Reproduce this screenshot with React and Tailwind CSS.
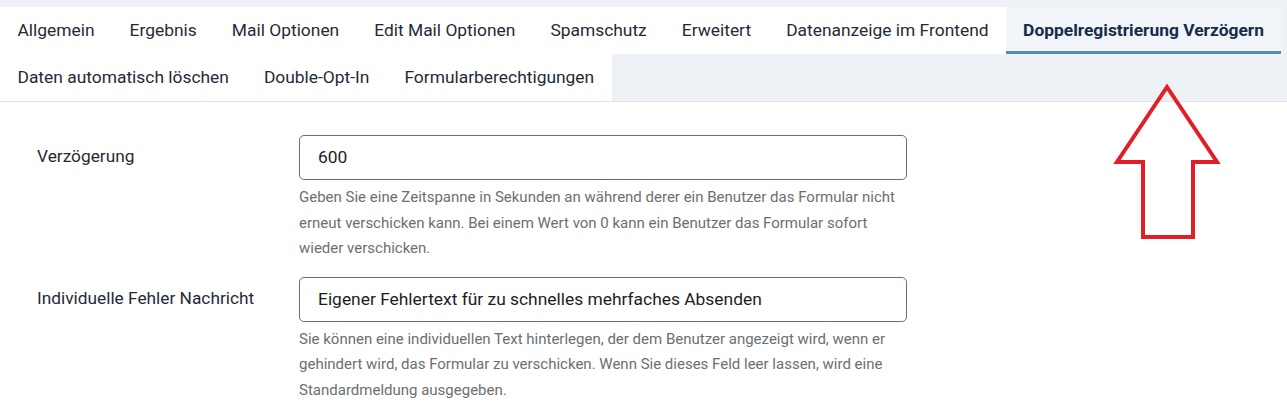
import React from "react";

const row1 = ["Allgemein", "Ergebnis", "Mail Optionen", "Edit Mail Optionen", "Spamschutz", "Erweitert", "Datenanzeige im Frontend"];
const row2 = ["Daten automatisch löschen", "Double-Opt-In", "Formularberechtigungen"];

function Tab({ children }) {
  return (
    <div className="h-[47px] flex items-center px-[17.5px] bg-white text-[17.4px] text-[#1f2a38] whitespace-nowrap">
      {children}
    </div>
  );
}

function Field({ label, value, help }) {
  return (
    <div className="flex">
      <div className="w-[262px] shrink-0 pt-[9px] text-[17.3px] text-[#1f2a38]">{label}</div>
      <div className="w-[608px]">
        <div className="h-[45px] flex items-center px-[18px] border border-[#5b7a64] rounded-[5px] text-[17.4px] text-[#1d1d1d] bg-white">
          {value}
        </div>
        <div className="mt-[5px] text-[15px] leading-[25.5px] text-[#6b6f73]">{help}</div>
      </div>
    </div>
  );
}

export default function App() {
  return (
    <div className="w-[1287px] h-[408px] bg-white overflow-hidden relative" style={{ fontFamily: "Roboto, 'Noto Sans', sans-serif" }}>
      <div className="bg-[#eef2f6] pt-[7px] border-b border-[#dde3ea]">
        <div className="flex">
          {row1.map((t) => (
            <Tab key={t}>{t}</Tab>
          ))}
          <div className="h-[47px] flex items-center px-[17px] bg-[#f2f5f9] border-b-[3px] border-[#5a86b9] pt-[3px] text-[17.4px] font-bold text-[#162c4c] whitespace-nowrap">
            Doppelregistrierung Verzögern
          </div>
        </div>
        <div className="flex">
          {row2.map((t) => (
            <Tab key={t}>{t}</Tab>
          ))}
        </div>
      </div>
      <div className="pl-[37px] pt-[33px] flex flex-col gap-[15px]">
        <Field
          label="Verzögerung"
          value="600"
          help="Geben Sie eine Zeitspanne in Sekunden an während derer ein Benutzer das Formular nicht erneut verschicken kann. Bei einem Wert von 0 kann ein Benutzer das Formular sofort wieder verschicken."
        />
        <Field
          label="Individuelle Fehler Nachricht"
          value="Eigener Fehlertext für zu schnelles mehrfaches Absenden"
          help="Sie können eine individuellen Text hinterlegen, der dem Benutzer angezeigt wird, wenn er gehindert wird, das Formular zu verschicken. Wenn Sie dieses Feld leer lassen, wird eine Standardmeldung ausgegeben."
        />
      </div>
      <svg className="absolute left-0 top-0 pointer-events-none" width="1287" height="408">
        <polygon
          points="1167,87 1217,162 1193,162 1193,237 1143,237 1143,162 1117,162"
          fill="none"
          stroke="#e41e26"
          strokeWidth="4"
          strokeLinejoin="miter"
        />
      </svg>
    </div>
  );
}
